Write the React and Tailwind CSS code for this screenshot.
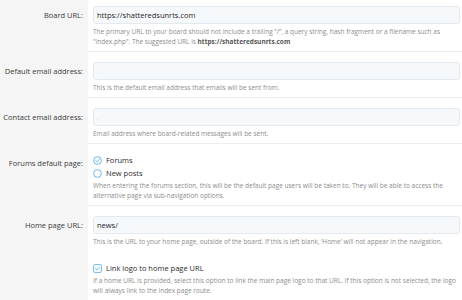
import React from "react";

const font = { fontFamily: '"Open Sans", "Noto Sans", sans-serif' };

function Row({ label, children, first, last }) {
  return (
    <div className="flex">
      <div
        className={`w-[88px] shrink-0 bg-[#f5f5f5] pr-[5px] text-right text-[7.5px] leading-[18px] text-[#3a3a3a] whitespace-nowrap ${
          first ? "pt-[6px]" : "pt-[10px]"
        }`}
      >
        {label}
      </div>
      <div
        className={`flex-1 pl-[5px] pr-[2px] pb-[4px] ${first ? "pt-[6px]" : "pt-[10px]"} ${
          last ? "" : "border-b border-[#ededed]"
        }`}
      >
        {children}
      </div>
    </div>
  );
}

function Input({ value, faint }) {
  return (
    <div className="h-[18px] rounded-[3px] border border-[#e4e9ee] bg-[#f6f9fc] px-[3px] text-[7.5px] leading-[16px] text-[#1d1d1d]">
      {faint ? <span className="text-[#d0d6dc]">.</span> : value}
    </div>
  );
}

function Hint({ children, tight }) {
  return (
    <div className={`${tight ? "mt-[2px]" : "mt-[3px]"} text-[6.5px] leading-[10px] text-[#8c8c8c] whitespace-nowrap`}>
      {children}
    </div>
  );
}

function RadioOn() {
  return (
    <svg width="9" height="9" viewBox="0 0 10 10" className="shrink-0">
      <circle cx="5" cy="5" r="4.3" fill="none" stroke="#47a7eb" strokeWidth="0.9" />
      <path d="M3 5.1 L4.5 6.5 L7.1 3.7" fill="none" stroke="#47a7eb" strokeWidth="0.9" strokeLinecap="round" strokeLinejoin="round" />
    </svg>
  );
}

function RadioOff() {
  return (
    <svg width="9" height="9" viewBox="0 0 10 10" className="shrink-0">
      <circle cx="5" cy="5" r="4.3" fill="none" stroke="#47a7eb" strokeWidth="0.9" />
    </svg>
  );
}

function CheckOn() {
  return (
    <svg width="9" height="9" viewBox="0 0 10 10" className="shrink-0">
      <rect x="0.7" y="0.7" width="8.6" height="8.6" rx="1" fill="none" stroke="#47a7eb" strokeWidth="0.9" />
      <path d="M2.8 5.1 L4.4 6.6 L7.3 3.5" fill="none" stroke="#47a7eb" strokeWidth="0.9" strokeLinecap="round" strokeLinejoin="round" />
    </svg>
  );
}

export default function App() {
  return (
    <div className="w-[462px] h-[300px] overflow-hidden bg-white" style={font}>
      <Row label="Board URL:" first>
        <Input value="https://shatteredsunrts.com" />
        <Hint>
          The primary URL to your board should not include a trailing “/”, a query string, hash fragment or a filename such as
          <br />
          "index.php". The suggested URL is <b className="font-bold text-[#555]">https://shatteredsunrts.com</b>
        </Hint>
      </Row>
      <Row label="Default email address:">
        <Input faint />
        <Hint>This is the default email address that emails will be sent from.</Hint>
      </Row>
      <Row label="Contact email address:">
        <Input faint />
        <Hint>Email address where board-related messages will be sent.</Hint>
      </Row>
      <Row label="Forums default page:">
        <div className="flex flex-col text-[7.5px] leading-[12px] text-[#2a2a2a]">
          <div className="flex items-center gap-[4px]">
            <RadioOn />
            <span>Forums</span>
          </div>
          <div className="mt-[1px] flex items-center gap-[4px]">
            <RadioOff />
            <span>New posts</span>
          </div>
        </div>
        <Hint tight>
          When entering the forums section, this will be the default page users will be taken to. They will be able to access the
          <br />
          alternative page via sub-navigation options.
        </Hint>
      </Row>
      <div className="flex">
        <div className="w-[88px] shrink-0 bg-[#f5f5f5] pr-[5px] pt-[10px] text-right text-[7.5px] leading-[18px] text-[#3a3a3a] whitespace-nowrap">
          Home page URL:
        </div>
        <div className="flex-1 pl-[5px] pr-[2px] pt-[10px] pb-[5px]">
          <Input value="news/" />
          <Hint>This is the URL to your home page, outside of the board. If this is left blank, ‘Home’ will not appear in the navigation.</Hint>
          <div className="mt-[15px] flex items-center gap-[4px] text-[7.5px] leading-[12px] text-[#2a2a2a]">
            <CheckOn />
            <span>Link logo to home page URL</span>
          </div>
          <Hint tight>
            If a home URL is provided, select this option to link the main page logo to that URL. If this option is not selected, the logo
            <br />
            will always link to the index page route.
          </Hint>
        </div>
      </div>
    </div>
  );
}
